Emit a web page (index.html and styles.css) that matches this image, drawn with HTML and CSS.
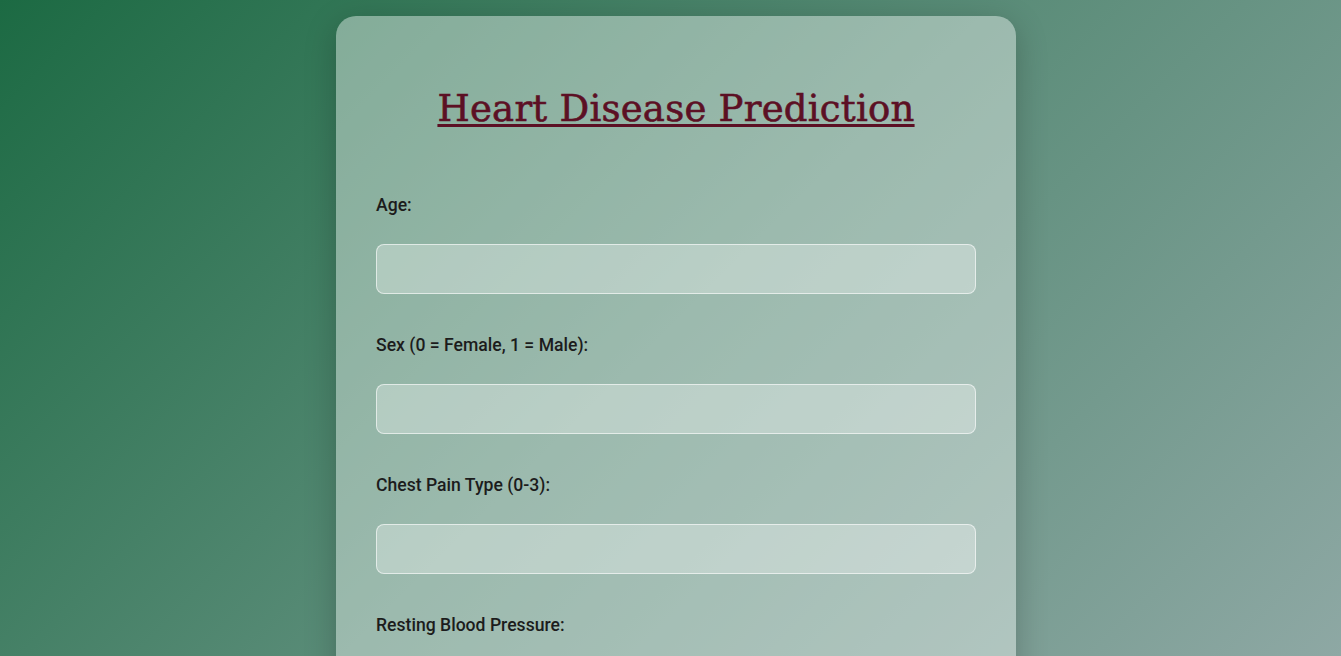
FILE: index.html
```html
<!DOCTYPE html>
<html lang="en">
<head>
<meta charset="utf-8">
<title>Heart Disease Prediction</title>
<link rel="stylesheet" href="styles.css">
</head>
<body>
<main class="page">
  <div class="card">
    <h1 class="title">Heart Disease Prediction</h1>
    <form class="form">
      <div class="field">
        <label class="label" for="age">Age:</label>
        <input class="input" id="age" type="text">
      </div>
      <div class="field">
        <label class="label" for="sex">Sex (0 = Female, 1 = Male):</label>
        <input class="input" id="sex" type="text">
      </div>
      <div class="field">
        <label class="label" for="cp">Chest Pain Type (0-3):</label>
        <input class="input" id="cp" type="text">
      </div>
      <div class="field">
        <label class="label" for="bp">Resting Blood Pressure:</label>
        <input class="input" id="bp" type="text">
      </div>
      <div class="field">
        <label class="label" for="chol">Cholesterol:</label>
        <input class="input" id="chol" type="text">
      </div>
    </form>
  </div>
</main>
</body>
</html>
```
FILE: styles.css
```css
html, body {
  margin: 0;
  padding: 0;
}
body {
  min-height: 100vh;
  background: linear-gradient(135deg, #1c6a43 0%, #5a8c78 50%, #8ea8a4 100%);
  background-attachment: fixed;
  font-family: Roboto, "Liberation Sans", sans-serif;
  color: #1c1c1c;
}
.page {
  display: flex;
  justify-content: center;
  padding: 16px 0 40px 11px;
}
.card {
  width: 600px;
  padding: 40px;
  background: rgba(255, 255, 255, 0.4);
  border-radius: 20px;
  box-shadow: 0 8px 32px rgba(0, 0, 0, 0.22);
}
.title {
  margin: 29px 0 62px;
  text-align: center;
  font-family: "DejaVu Serif", "Liberation Serif", serif;
  font-size: 37px;
  line-height: 48px;
  font-weight: 400;
  letter-spacing: 0.25px;
  color: #5c1024;
  -webkit-text-stroke: 0.6px #5c1024;
  text-decoration: underline;
  text-decoration-thickness: 3px;
  text-underline-offset: 3px;
}
.form {
  display: flex;
  flex-direction: column;
  gap: 41px;
}
.field {
  display: flex;
  flex-direction: column;
  gap: 28px;
}
.label {
  font-size: 17.6px;
  font-weight: 500;
  line-height: 21px;
  color: #1c1c1c;
}
.input {
  box-sizing: border-box;
  width: 100%;
  height: 50px;
  margin: 0;
  padding: 0 14px;
  border: 1px solid rgba(255, 255, 255, 0.6);
  border-radius: 8px;
  background: rgba(255, 255, 255, 0.3);
  font-family: Roboto, sans-serif;
  font-size: 16px;
  outline: none;
}
```
